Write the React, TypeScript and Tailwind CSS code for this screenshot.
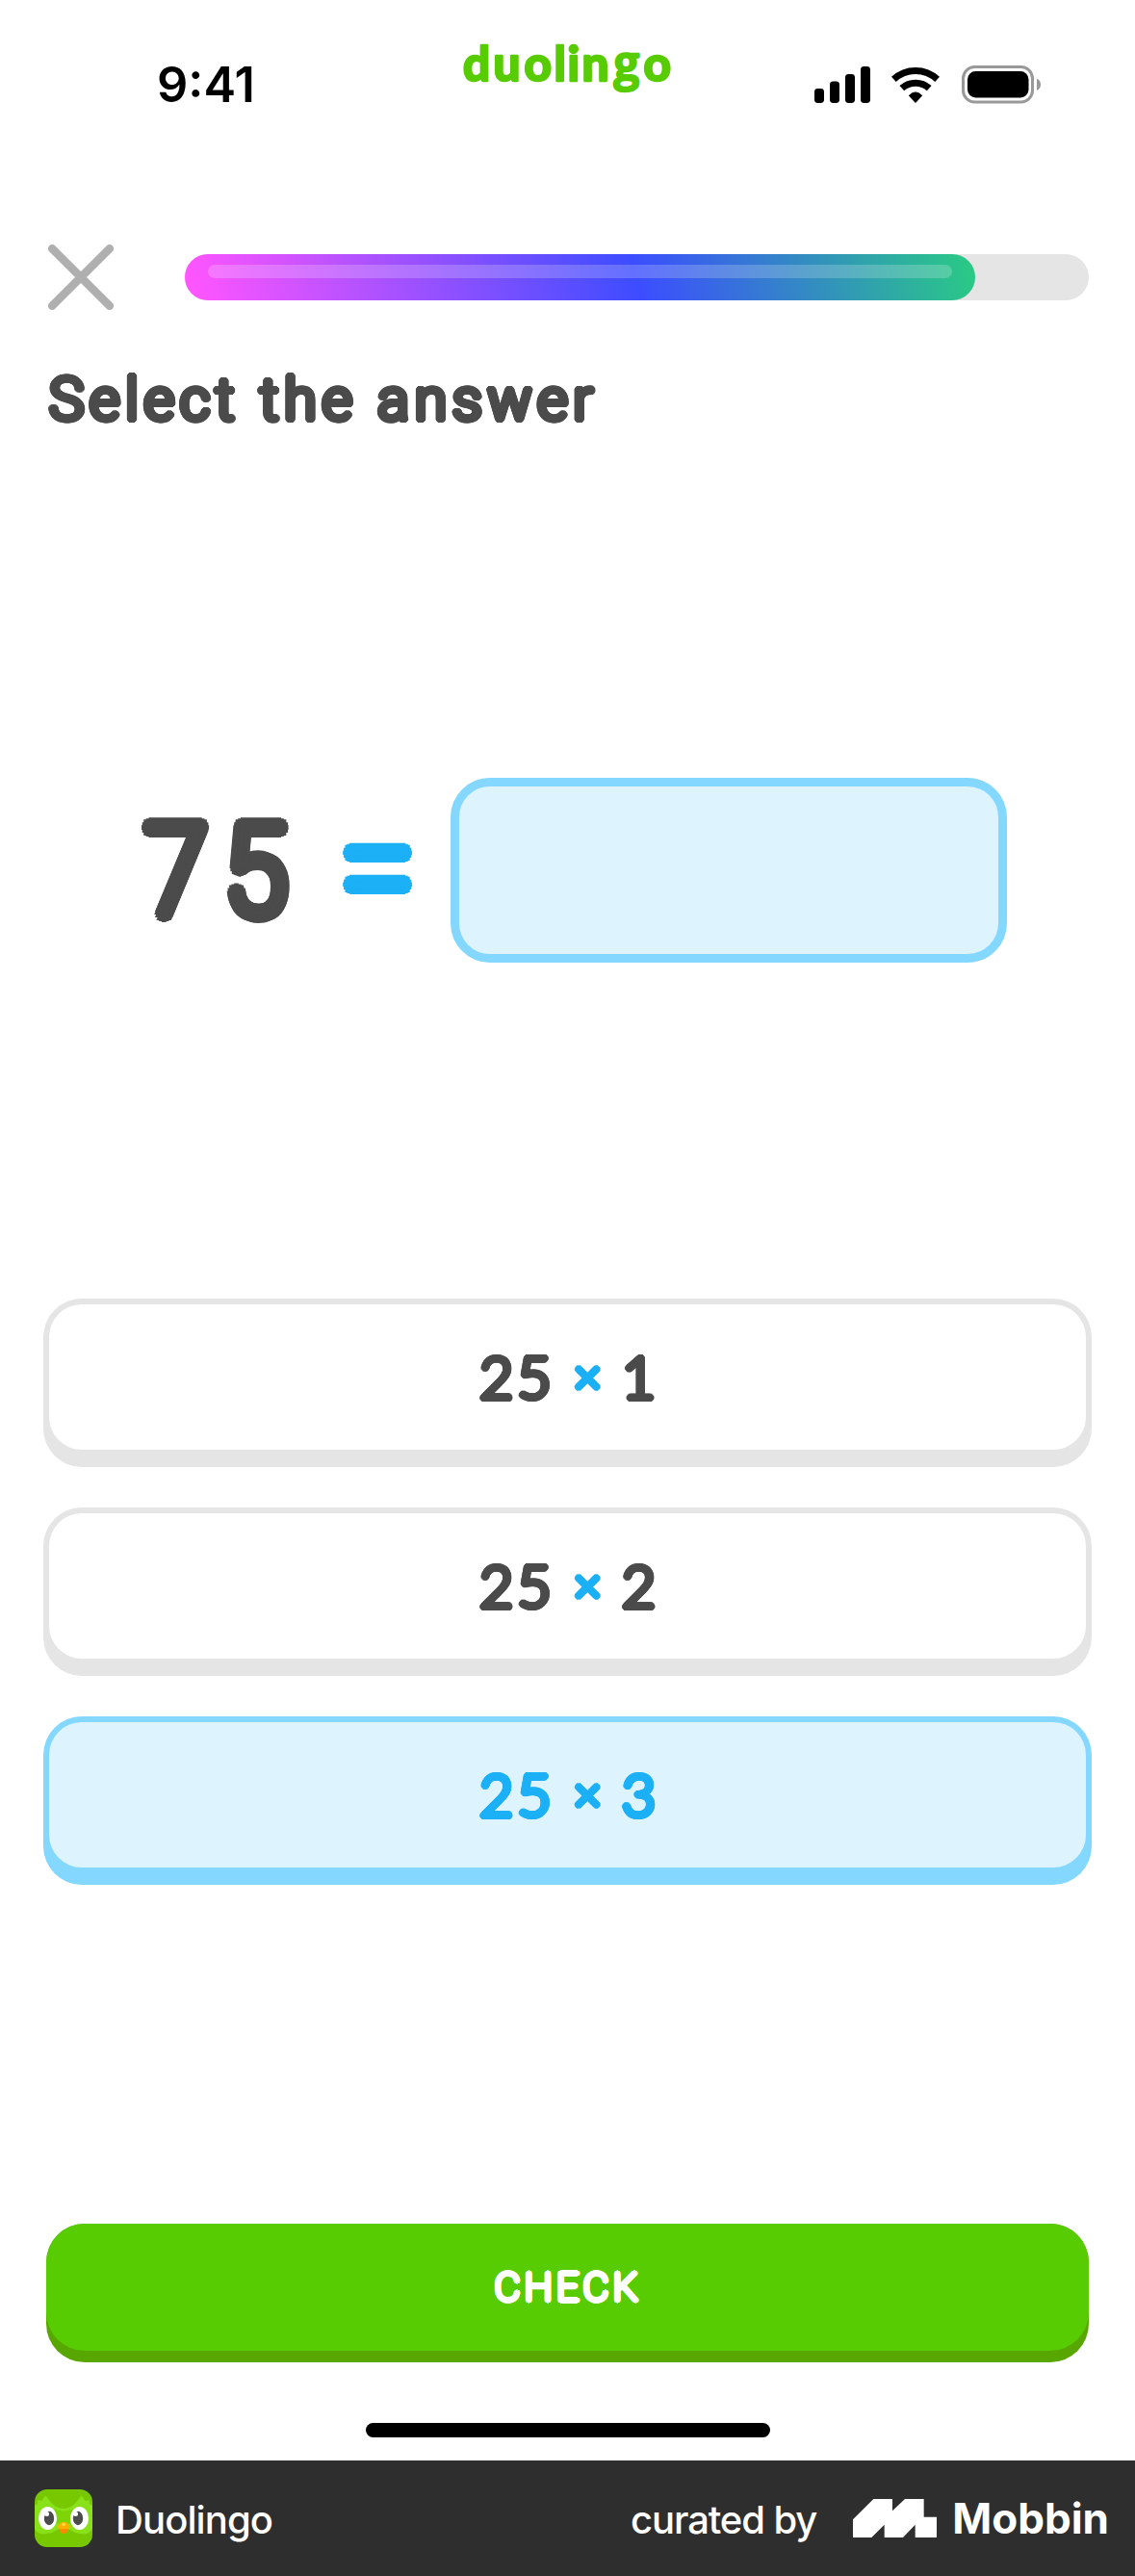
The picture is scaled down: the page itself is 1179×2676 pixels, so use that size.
import type { ReactNode } from "react";

/* Swells a thin face by --r in every direction, which gives round stroke ends. */
const ROUND =
  "[text-shadow:var(--r)_0,calc(var(--r)*-1)_0,0_var(--r),0_calc(var(--r)*-1),calc(var(--r)*.707)_calc(var(--r)*.707),calc(var(--r)*-.707)_calc(var(--r)*.707),calc(var(--r)*.707)_calc(var(--r)*-.707),calc(var(--r)*-.707)_calc(var(--r)*-.707),calc(var(--r)*.924)_calc(var(--r)*.383),calc(var(--r)*-.924)_calc(var(--r)*.383),calc(var(--r)*.924)_calc(var(--r)*-.383),calc(var(--r)*-.924)_calc(var(--r)*-.383),calc(var(--r)*.383)_calc(var(--r)*.924),calc(var(--r)*-.383)_calc(var(--r)*.924),calc(var(--r)*.383)_calc(var(--r)*-.924),calc(var(--r)*-.383)_calc(var(--r)*-.924),calc(var(--r)*.5)_0,calc(var(--r)*-.5)_0,0_calc(var(--r)*.5),0_calc(var(--r)*-.5)]";

function StatusBar() {
  return (
    <header className="relative flex h-[176px] items-start justify-between pr-[98px] pl-[163px]">
      <span className="mt-[57px] font-[Inter] text-[50.500px] leading-[61px] font-semibold tracking-[0px] text-black">9:41</span>
      <div className="absolute top-[18px] left-[466px]">
        <DuolingoWordmark />
      </div>
      <div className="mt-[66px] flex items-center gap-[18px]">
        <svg className="h-[44px] w-[60px]" viewBox="0 0 60 44">
          <rect x="1" y="26" width="10" height="15" rx="3.4" />
          <rect x="17" y="18.500" width="10" height="22.500" rx="3.4" />
          <rect x="33" y="11" width="10" height="30" rx="3.4" />
          <rect x="49" y="3" width="10" height="38" rx="3.4" />
        </svg>
        <svg className="h-[44px] w-[56px]" viewBox="0 0 56 44" fill="none" stroke="#000" strokeWidth="7">
          <path d="M5.400 16.400A33 33 0 0 1 50.600 16.400" />
          <path d="M13.800 25.700A21 21 0 0 1 42.200 25.700" />
          <path d="M28 40.500L21.300 33.300Q28 26.500 34.700 33.300Z" fill="#000" stroke="#000" strokeWidth="1" strokeLinejoin="round" />
        </svg>
        <svg className="h-[44px] w-[84px]" viewBox="0 0 84 44">
          <rect x="3.500" y="3.500" width="72" height="36.500" rx="12" fill="none" stroke="#999" strokeWidth="3" />
          <rect x="8" y="8" width="63.500" height="27.500" rx="8.500" />
          <path d="M80 15.500Q84 17.500 84 21.700Q84 26 80 28Z" fill="#999" />
        </svg>
      </div>
    </header>
  );
}

function DuolingoWordmark() {
  return (
    <svg className="h-[100px] w-[248px]" viewBox="0 0 248 100" fill="#58cc02" stroke="#58cc02" strokeWidth="2.6" strokeLinejoin="round" fontWeight="700" fontSize="49.500" fontFamily="Lato, sans-serif">
      <text y="65.500" x="15 46.500 78.500 109.500 123.500 138.500">duolin</text>
      <text y="65" x="171.500" fontFamily="Open Sans" fontSize="48" fontWeight="600">g</text>
      <text y="65.500" x="202.500">o</text>
    </svg>
  );
}

function Progress() {
  return (
    <div className="flex h-[68px] items-center gap-[74px] px-[48px]">
      <svg className="h-[72px] w-[70px] shrink-0" viewBox="0 0 70 72" fill="none" stroke="#afafaf" strokeWidth="8.500" strokeLinecap="round">
        <path d="M6.200 6.200L65.800 65.800M65.800 6.200L6.200 65.800" />
      </svg>
      <div className="h-[48px] flex-1 rounded-full bg-[#e5e5e5]">
        <div className="h-full w-[821px] rounded-full bg-[linear-gradient(75deg,#ff55ff_1%,#3c4dff_57%,#2ac986_99%)] px-[24px] pt-[11px]">
          <div className="h-[14px] rounded-full bg-white/20" />
        </div>
      </div>
    </div>
  );
}

function Option({ factor, selected = false }: { factor: ReactNode; selected?: boolean }) {
  const tone = selected ? "bg-[#84d8ff] text-[#1cb0f6]" : "bg-[#e5e5e5] text-[#4b4b4b]";
  const face = selected ? "bg-[#ddf4ff]" : "bg-white";
  return (
    <button className={`block h-[175px] w-full rounded-[40px] px-[6px] pt-[6px] pb-[18px] ${tone}`}>
      <span className={`flex h-full items-center justify-center rounded-[34px] pb-[3px] font-[Lato] text-[61px] leading-none font-light [--r:3.200px] ${ROUND} ${face}`}>
        <span className="tracking-[4px]">25</span>
        <span className="mr-[21px] ml-[19px] text-[50px] text-[#1cb0f6]">×</span>
        <span>{factor}</span>
      </span>
    </button>
  );
}

function OwlIcon() {
  return (
    <svg className="h-[60px] w-[60px]" viewBox="0 0 60 60">
      <defs>
        <clipPath id="tile"><rect width="60" height="60" rx="13" /></clipPath>
      </defs>
      <g clipPath="url(#tile)">
        <rect width="60" height="60" fill="#78c800" />
        <path d="M0 17L3 15L3.500 11L7 12L11.500 6.500L16.500 13Q22 20 30 20T43.500 13L48.500 6.500L53 12L56.500 11L57 15L60 17V41Q56 48 48 46L42 45Q37 41 30 41T18 45L12 46Q4 48 0 41Z" fill="#89e219" />
        <path d="M20 20Q30 25 40 20L37 36H23Z" fill="#7dd507" />
        <ellipse cx="13.500" cy="30" rx="9.500" ry="12" fill="#fff" />
        <ellipse cx="46.500" cy="30" rx="9.500" ry="12" fill="#fff" />
        <ellipse cx="15" cy="30" rx="5.200" ry="7.200" fill="#4b4b4b" />
        <ellipse cx="45" cy="30" rx="5.200" ry="7.200" fill="#4b4b4b" />
        <circle cx="12.500" cy="25.500" r="2.500" fill="#fff" />
        <circle cx="42.500" cy="25.500" r="2.500" fill="#fff" />
        <path d="M25 40H35.500Q33.500 46 30.200 46T25 40Z" fill="#ff8a00" />
        <path d="M23.500 39Q26 34 30.200 34T37 39Q35 42 30.200 41Q25.500 42 23.500 39Z" fill="#ffb100" />
        <circle cx="30.200" cy="36.500" r="1.800" fill="#ffdc3d" />
      </g>
    </svg>
  );
}

function Footer() {
  return (
    <footer className="flex h-[120px] items-center bg-[#2e2e2e] pr-[27px] pl-[36px] font-[Inter] text-white">
      <OwlIcon />
      <span className="mt-[3px] ml-[24px] text-[40px] leading-none font-medium tracking-[-0.9px]">Duolingo</span>
      <span className="mt-[3px] ml-auto text-[40px] leading-none font-medium tracking-[-1.1px]">curated by</span>
      <svg className="ml-[38px] h-[40px] w-[87px]" viewBox="78 168 261 120" fill="#fff">
        <path d="M78 232L142 168H201V205L240 168H299V224H339V288H272V248L234 288H176V248L136 288H78Z" />
      </svg>
      <span className="ml-[16px] text-[44px] leading-none font-bold tracking-[0px]">Mobbin</span>
    </footer>
  );
}

export default function App() {
  return (
    <div className="flex h-[2676px] w-[1179px] flex-col overflow-hidden bg-white">
      <StatusBar />
      <main className="flex flex-1 flex-col pt-[78px]">
        <Progress />
        <h1 className={`mt-[53px] ml-[51px] h-[80px] font-[Roboto] text-[61px] leading-[80px] font-light tracking-[5.700px] whitespace-nowrap text-[#4b4b4b] [--r:3.400px] ${ROUND}`}>
          Select the answer
        </h1>
        <section className="mt-[353px] flex h-[192px] items-center pl-[150px] font-[Roboto] leading-none font-thin">
          <span className={`w-[203px] origin-left scale-x-[.93] pt-[2px] text-[129px] font-extralight tracking-[18px] text-[#4b4b4b] [--r:8px] ${ROUND}`}>75</span>
          <span className={`w-[115px] origin-left scale-x-[.86] pb-[10px] text-[165px] text-[#1cb0f6] [--r:8px] ${ROUND}`}>=</span>
          <div className="h-[192px] w-[578px] rounded-[41px] border-[9px] border-[#84d8ff] bg-[#ddf4ff]" />
        </section>
        <section className="mt-[349px] flex flex-col gap-[42px] px-[45px]">
          <Option factor="1" />
          <Option factor="2" />
          <Option factor="3" selected />
        </section>
        <div className="mt-auto px-[48px]">
          <button className="block h-[144px] w-full rounded-[40px] bg-[#58a700] pb-[12px]">
            <span className={`flex h-full items-center justify-center rounded-[40px] bg-[#58cc02] pl-[2px] font-[Roboto] text-[41px] leading-none font-thin tracking-[4.400px] text-white [--r:2.700px] ${ROUND}`}>CHECK</span>
          </button>
        </div>
        <div className="mx-auto mt-[63px] mb-[24px] h-[15px] w-[420px] rounded-full bg-black" />
      </main>
      <Footer />
    </div>
  );
}
